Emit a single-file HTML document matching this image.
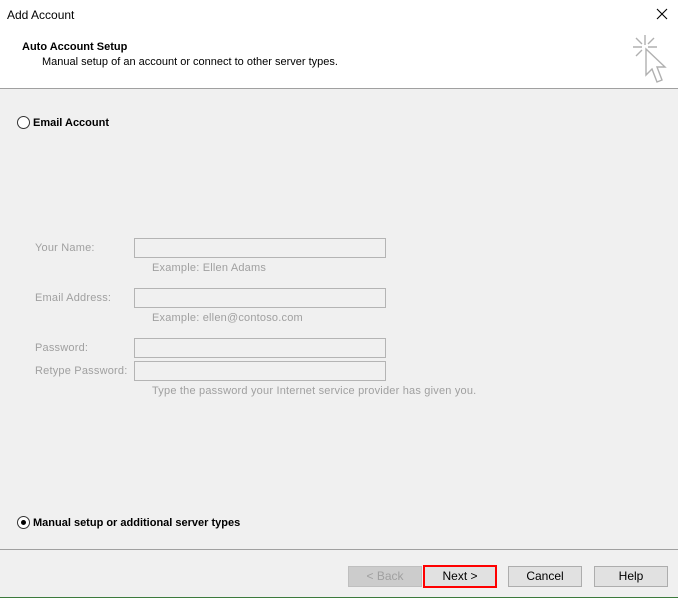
<!DOCTYPE html><html><head><style>
body{margin:0;width:678px;height:598px;position:relative;background:#f0f0f0;font-family:"Liberation Sans",sans-serif;font-size:12px;overflow:hidden}
.a{position:absolute;white-space:nowrap}
.g{color:#a0a0a0;letter-spacing:0.2px}
.b{font-weight:bold;font-size:11px}
.box{position:absolute;left:134px;width:250px;height:18px;border:1px solid #b4b4b4;background:#f0f0f0}
.btn{position:absolute;top:566px;height:19px;border:1px solid #adadad;background:#e1e1e1;text-align:center;line-height:19px;font-size:12px}
.r{position:absolute;width:11px;height:11px;border:1px solid #333;border-radius:50%;background:#fff}
</style></head><body>
<div class="a" style="left:0;top:0;width:678px;height:88px;background:#fff;border-bottom:1px solid #a0a0a0"></div>
<div class="a" style="left:7px;top:8px;font-size:12px;color:#000">Add Account</div>
<svg class="a" style="left:656px;top:8px" width="12" height="12"><path d="M1 1L11 11M11 1L1 11" stroke="#000" stroke-width="1.1"/></svg>
<div class="a b" style="left:22px;top:41px">Auto Account Setup</div>
<div class="a" style="left:42px;top:56px;font-size:11px">Manual setup of an account or connect to other server types.</div>
<svg class="a" style="left:630px;top:34px" width="40" height="52"><g stroke="#b0b0b0" stroke-width="1.4" fill="none"><path d="M15 1V11M3 13H12M18 13H27M6 4L12 10M24 4L18 10M6 22L12 16"/><path d="M16 15L16 41L22 35L27 48L32 46L27 33L35 33Z" fill="#fff"/></g></svg>
<div class="r" style="left:17px;top:116px"></div>
<div class="a b" style="left:33px;top:117px">Email Account</div>
<div class="a g" style="left:35px;top:242px;font-size:11px">Your Name:</div>
<div class="box" style="top:238px"></div>
<div class="a g" style="left:152px;top:262px;font-size:11px">Example: Ellen Adams</div>
<div class="a g" style="left:35px;top:292px;font-size:11px">Email Address:</div>
<div class="box" style="top:288px"></div>
<div class="a g" style="left:152px;top:312px;font-size:11px">Example: ellen@contoso.com</div>
<div class="a g" style="left:35px;top:342px;font-size:11px">Password:</div>
<div class="box" style="top:338px"></div>
<div class="a g" style="left:35px;top:365px;font-size:11px">Retype Password:</div>
<div class="box" style="top:361px"></div>
<div class="a g" style="left:152px;top:385px;font-size:11px">Type the password your Internet service provider has given you.</div>
<div class="r" style="left:17px;top:516px"></div>
<div class="a" style="left:21px;top:520px;width:5px;height:5px;border-radius:50%;background:#000"></div>
<div class="a b" style="left:33px;top:517px">Manual setup or additional server types</div>
<div class="a" style="left:0;top:549px;width:678px;height:1px;background:#a0a0a0"></div>
<div class="btn" style="left:348px;width:72px;color:#a0a0a0;background:#cccccc;border-color:#bfbfbf">&lt; Back</div>
<div class="btn" style="left:423px;width:70px;border:2px solid #f00;top:565px">Next &gt;</div>
<div class="btn" style="left:508px;width:72px">Cancel</div>
<div class="btn" style="left:594px;width:72px">Help</div>
<div class="a" style="left:0;top:597px;width:678px;height:1px;background:#3c7a3c"></div>
</body></html>
